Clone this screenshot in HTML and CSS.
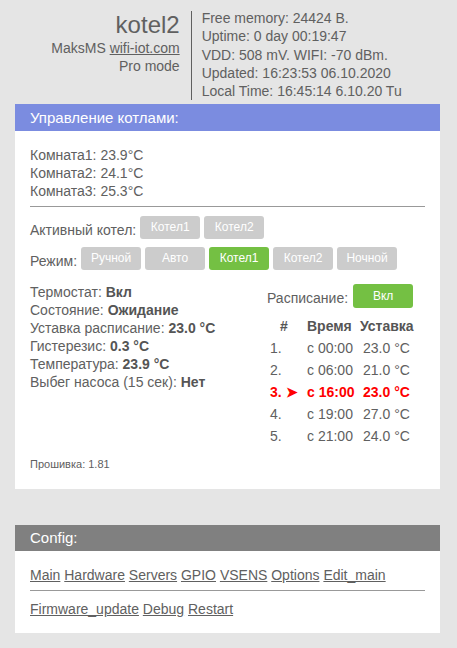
FILE: index.html
```html
<!DOCTYPE html>
<html>
<head>
<meta charset="utf-8">
<link rel="stylesheet" href="styles.css">
</head>
<body>
<div class="top">
  <div class="brand">
    <div class="name">kotel2</div>
    <div class="line">MaksMS <a href="#">wifi-iot.com</a></div>
    <div class="line">Pro mode</div>
  </div>
  <div class="status">
    <div>Free memory: 24424 B.</div>
    <div>Uptime: 0 day 00:19:47</div>
    <div>VDD: 508 mV. WIFI: -70 dBm.</div>
    <div>Updated: 16:23:53 06.10.2020</div>
    <div>Local Time: 16:45:14 6.10.20 Tu</div>
  </div>
</div>

<div class="panel">
  <div class="panel-head blue">Управление котлами:</div>
  <div class="panel-body main">
    <div class="rooms">
      <div>Комната1: 23.9°C</div>
      <div>Комната2: 24.1°C</div>
      <div>Комната3: 25.3°C</div>
    </div>
    <hr class="rule">
    <div class="btn-row">
      <span class="label">Активный котел:</span>
      <span class="btn">Котел1</span>
      <span class="btn">Котел2</span>
    </div>
    <div class="btn-row second">
      <span class="label">Режим:</span>
      <span class="btn">Ручной</span>
      <span class="btn">Авто</span>
      <span class="btn on">Котел1</span>
      <span class="btn">Котел2</span>
      <span class="btn">Ночной</span>
    </div>
    <div class="cols">
      <div class="info">
        <div>Термостат: <b>Вкл</b></div>
        <div>Состояние: <b>Ожидание</b></div>
        <div>Уставка расписание: <b>23.0 °C</b></div>
        <div>Гистерезис: <b>0.3 °C</b></div>
        <div>Температура: <b>23.9 °C</b></div>
        <div>Выбег насоса (15 сек): <b>Нет</b></div>
      </div>
      <div class="sched">
        <div class="sched-head">
          <span class="label">Расписание:</span>
          <span class="btn on tall">Вкл</span>
        </div>
        <table class="tbl">
          <tr><th class="c1">#</th><th class="c2">Время</th><th class="c3">Уставка</th></tr>
          <tr><td>1.</td><td>с 00:00</td><td class="v">23.0 °C</td></tr>
          <tr><td>2.</td><td>с 06:00</td><td class="v">21.0 °C</td></tr>
          <tr class="cur"><td>3. ➤</td><td>с 16:00</td><td class="v">23.0 °C</td></tr>
          <tr><td>4.</td><td>с 19:00</td><td class="v">27.0 °C</td></tr>
          <tr><td>5.</td><td>с 21:00</td><td class="v">24.0 °C</td></tr>
        </table>
      </div>
    </div>
    <div class="fw">Прошивка: 1.81</div>
  </div>
</div>

<div class="panel cfg">
  <div class="panel-head gray">Config:</div>
  <div class="panel-body links">
    <div><a href="#">Main</a> <a href="#">Hardware</a> <a href="#">Servers</a> <a href="#">GPIO</a> <a href="#">VSENS</a> <a href="#">Options</a> <a href="#">Edit_main</a></div>
    <hr class="rule">
    <div><a href="#">Firmware_update</a> <a href="#">Debug</a> <a href="#">Restart</a></div>
  </div>
</div>
</body>
</html>
```

FILE: styles.css
```css
html, body {
  margin: 0;
  padding: 0;
  background: #e5e5e5;
}
body {
  font-family: "Liberation Sans", Arial, sans-serif;
  font-size: 14px;
  line-height: 18px;
  color: #606060;
}
a {
  color: #606060;
  text-decoration: underline;
}
.top {
  display: flex;
  justify-content: center;
  padding-top: 9px;
  padding-right: 4px;
  height: 95px;
}
.brand {
  text-align: right;
  padding-right: 11px;
  border-right: 1px solid #606060;
  height: 89px;
  margin-top: 2px;
}
.brand .name {
  font-size: 24px;
  line-height: 26px;
  margin-top: 1px;
  margin-bottom: 1px;
}
.brand .line {
  line-height: 18px;
}
.status {
  padding-left: 10px;
  line-height: 18.3px;
}
.panel {
  margin: 0 17px 0 15px;
  background: #fff;
}
.panel-head {
  height: 27px;
  line-height: 27px;
  padding-left: 15px;
  color: #fff;
  font-size: 15px;
}
.blue { background: #7b8ce0; }
.gray { background: #808080; height: 26px; line-height: 26px; }
.panel-body {
  padding: 15px;
}
.panel-body.main {
  padding-bottom: 18px;
}
.rule {
  border: 0;
  border-top: 1px solid #999;
  margin: 6px 0 9px 0;
  height: 0;
}
.btn-row {
  display: flex;
  align-items: center;
  gap: 4px;
  height: 23px;
}
.btn-row .label {
  position: relative;
  top: 2px;
}
.btn-row.second {
  margin-top: 8px;
}
.btn {
  display: inline-block;
  width: 60px;
  height: 23px;
  line-height: 23px;
  text-align: center;
  background: #cccccc;
  color: #fff;
  font-size: 12px;
  border-radius: 3px;
}
.btn.on { background: #74c043; }
.btn.tall { height: 24px; line-height: 24px; }
.cols {
  display: flex;
  margin-top: 13px;
}
.info {
  width: 237px;
}
.info b { color: #555; }
.sched-head {
  display: flex;
  align-items: center;
  gap: 5px;
  margin-top: 1px;
}
.sched-head .label { position: relative; top: 2px; }
.tbl {
  border-collapse: collapse;
  margin-top: 7px;
  margin-left: 3px;
}
.tbl th, .tbl td {
  padding: 0;
  height: 22px;
  text-align: left;
  white-space: nowrap;
}
.tbl th { color: #555; }
.tbl th.c1 { width: 37px; text-align: left; padding-left: 10px; box-sizing: border-box; }
.tbl th.c2 { width: 53px; }
.tbl th.c3 { width: 53px; }
.tbl td.v { padding-left: 3px; }
.tbl tr.cur td { color: #f00; font-weight: bold; }
.fw {
  font-size: 11px;
  margin-top: 10px;
  line-height: 14px;
}
.cfg {
  margin-top: 36px;
}
```
